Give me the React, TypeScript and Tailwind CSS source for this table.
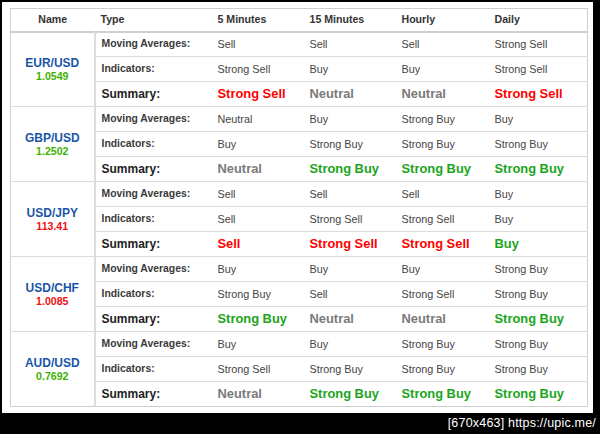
import React from 'react';

type Signal = 'Strong Sell' | 'Sell' | 'Neutral' | 'Buy' | 'Strong Buy';

interface Pair {
    name: string;
    price: string;
    up: boolean;
    ma: Signal[];
    ind: Signal[];
    sum: Signal[];
}

const pairs: Pair[] = [
    {
        name: 'EUR/USD',
        price: '1.0549',
        up: true,
        ma: ['Sell', 'Sell', 'Sell', 'Strong Sell'],
        ind: ['Strong Sell', 'Buy', 'Buy', 'Strong Sell'],
        sum: ['Strong Sell', 'Neutral', 'Neutral', 'Strong Sell'],
    },
    {
        name: 'GBP/USD',
        price: '1.2502',
        up: true,
        ma: ['Neutral', 'Buy', 'Strong Buy', 'Buy'],
        ind: ['Buy', 'Strong Buy', 'Strong Buy', 'Strong Buy'],
        sum: ['Neutral', 'Strong Buy', 'Strong Buy', 'Strong Buy'],
    },
    {
        name: 'USD/JPY',
        price: '113.41',
        up: false,
        ma: ['Sell', 'Sell', 'Sell', 'Buy'],
        ind: ['Sell', 'Strong Sell', 'Strong Sell', 'Buy'],
        sum: ['Sell', 'Strong Sell', 'Strong Sell', 'Buy'],
    },
    {
        name: 'USD/CHF',
        price: '1.0085',
        up: false,
        ma: ['Buy', 'Buy', 'Buy', 'Strong Buy'],
        ind: ['Strong Buy', 'Sell', 'Strong Sell', 'Strong Buy'],
        sum: ['Strong Buy', 'Neutral', 'Neutral', 'Strong Buy'],
    },
    {
        name: 'AUD/USD',
        price: '0.7692',
        up: true,
        ma: ['Buy', 'Buy', 'Strong Buy', 'Strong Buy'],
        ind: ['Strong Sell', 'Strong Buy', 'Strong Buy', 'Strong Buy'],
        sum: ['Neutral', 'Strong Buy', 'Strong Buy', 'Strong Buy'],
    },
];

const summaryColor = (s: Signal) => {
    if (s === 'Neutral') return 'text-[#7a7a7a]';
    if (s.includes('Sell')) return 'text-[#ff0000]';
    return 'text-[#1ba51b]';
};

export default function App() {
    return (
        <div
            className="w-[600px] h-[434px] bg-black pt-[2px] pl-[2px] flex flex-col"
            style={{ fontFamily: '"Liberation Sans", Arial, sans-serif' }}
        >
            {/* White page */}
            <div className="w-[591px] h-[411px] bg-white pt-[6px] pl-[8px]">
                <table className="table-fixed border-collapse w-[577px] border border-[#cfcfcf]">
                    <colgroup>
                        <col className="w-[84px]" />
                        <col className="w-[117px]" />
                        <col className="w-[92px]" />
                        <col className="w-[92px]" />
                        <col className="w-[93px]" />
                        <col className="w-[99px]" />
                    </colgroup>
                    <thead>
                        <tr className="h-[23px] border-b-2 border-[#cfcfcf] text-[10.6px] font-bold text-[#333]">
                            <th className="text-center p-0">Name</th>
                            <th className="text-left px-[6px]">Type</th>
                            <th className="text-left px-[6px]">5 Minutes</th>
                            <th className="text-left px-[6px]">15 Minutes</th>
                            <th className="text-left px-[6px]">Hourly</th>
                            <th className="text-left px-[6px]">Daily</th>
                        </tr>
                    </thead>
                    <tbody>
                        {pairs.map((p) => (
                            <React.Fragment key={p.name}>
                                <tr className="h-[25px] border-t border-[#dcdcdc]">
                                    <td
                                        rowSpan={3}
                                        className="text-center align-middle border-r-2 border-[#dcdcdc] p-0"
                                    >
                                        <div className="text-[12px] font-bold text-[#1a56a8] leading-[14px]">{p.name}</div>
                                        <div
                                            className={`text-[10.6px] font-bold leading-[13px] ${
                                                p.up ? 'text-[#3cb300]' : 'text-[#ee1111]'
                                            }`}
                                        >
                                            {p.price}
                                        </div>
                                    </td>
                                    <td className="px-[6px] text-[10.4px] font-bold text-[#3a3a3a]">Moving Averages:</td>
                                    {p.ma.map((v, i) => (
                                        <td key={i} className="px-[6px] text-[10.8px] text-[#444]">{v}</td>
                                    ))}
                                </tr>
                                <tr className="h-[25px] border-t border-[#dcdcdc]">
                                    <td className="px-[6px] text-[10.4px] font-bold text-[#3a3a3a]">Indicators:</td>
                                    {p.ind.map((v, i) => (
                                        <td key={i} className="px-[6px] text-[10.8px] text-[#444]">{v}</td>
                                    ))}
                                </tr>
                                <tr className="h-[25px] border-t border-[#dcdcdc]">
                                    <td className="px-[6px] text-[12px] font-bold text-[#222]">Summary:</td>
                                    {p.sum.map((v, i) => (
                                        <td key={i} className={`px-[6px] text-[12.9px] font-bold ${summaryColor(v)}`}>
                                            {v}
                                        </td>
                                    ))}
                                </tr>
                            </React.Fragment>
                        ))}
                    </tbody>
                </table>
            </div>

            {/* Watermark strip */}
            <div className="flex-1 flex items-center justify-end pr-[4px]">
                <span className="text-white text-[12.5px] tracking-[0.2px]">[670x463] https://upic.me/</span>
            </div>
        </div>
    );
}
